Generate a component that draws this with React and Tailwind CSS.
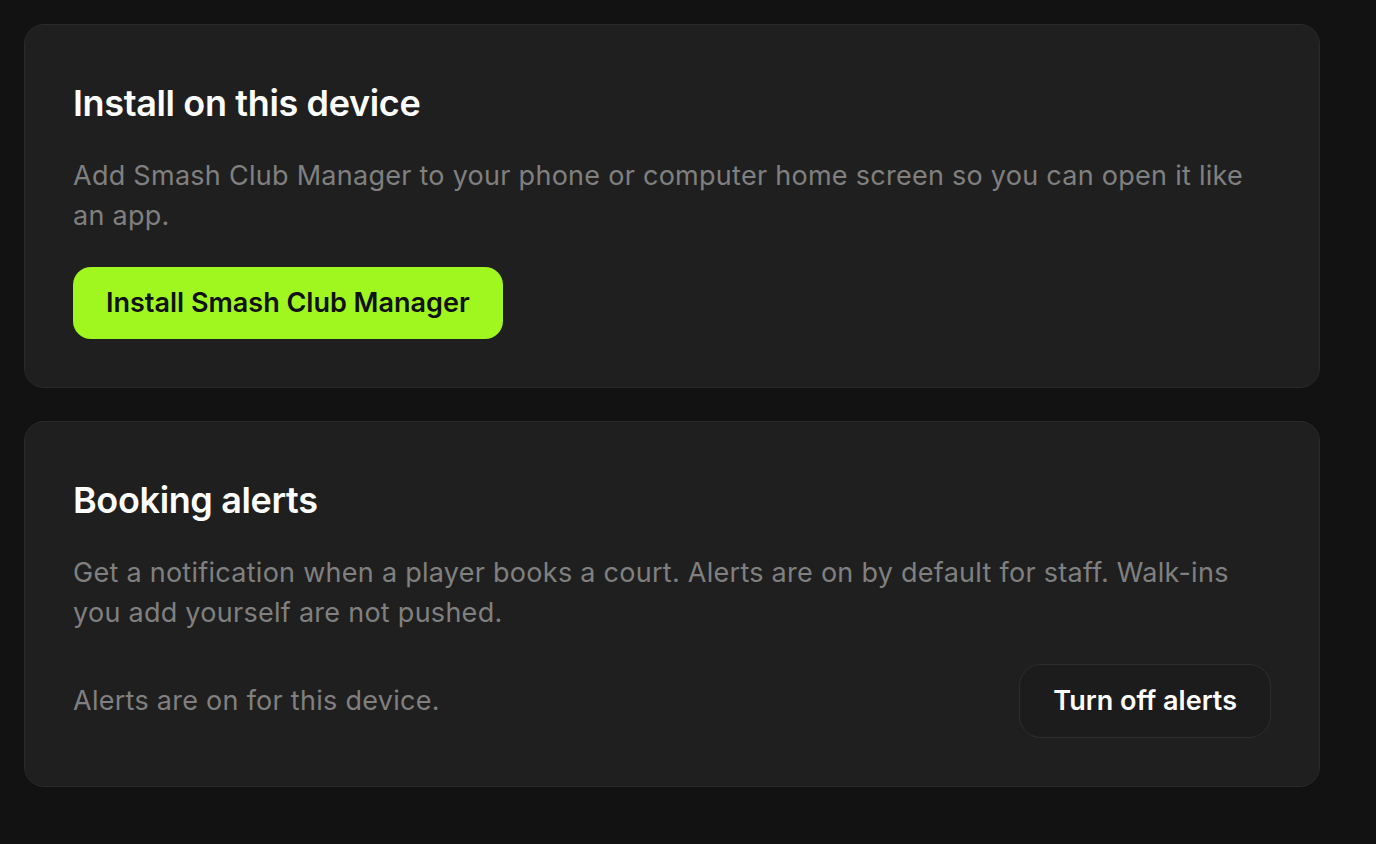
import React from 'react';

const font = { fontFamily: 'Inter, "Noto Sans", sans-serif' };

function Card({ title, children }) {
  return (
    <section className="rounded-[20px] border border-[#2a2a2a] bg-[#1f1f1f] px-12 pt-[56px] pb-12">
      <h2 className="text-[36px] leading-[44px] font-semibold tracking-[-0.01em] text-white">{title}</h2>
      {children}
    </section>
  );
}

export default function App() {
  return (
    <div className="min-h-screen bg-[#121212] pt-6 pl-6 pr-[56px] pb-14" style={font}>
      <div className="flex flex-col gap-[33px]">
        <Card title="Install on this device">
          <p className="mt-[31px] text-[27px] leading-[40px] tracking-[0.01em] text-[#808080]">
            Add Smash Club Manager to your phone or computer home screen so you can open it like an app.
          </p>
          <button className="mt-[31px] h-[72px] rounded-[18px] bg-[#a0f720] px-[33px] text-[27px] font-semibold text-[#111111]">
            Install Smash Club Manager
          </button>
        </Card>

        <Card title="Booking alerts">
          <p className="mt-[31px] text-[27px] leading-[40px] tracking-[0.01em] text-[#808080]">
            Get a notification when a player books a court. Alerts are on by default for staff. Walk-ins you add yourself are not pushed.
          </p>
          <div className="mt-[31px] flex items-center justify-between">
            <span className="text-[27px] tracking-[0.01em] text-[#808080]">Alerts are on for this device.</span>
            <button className="h-[74px] rounded-[22px] border border-[#2e2e2e] bg-[#1c1c1c] px-[33px] text-[27px] font-semibold text-white">
              Turn off alerts
            </button>
          </div>
        </Card>
      </div>
    </div>
  );
}
